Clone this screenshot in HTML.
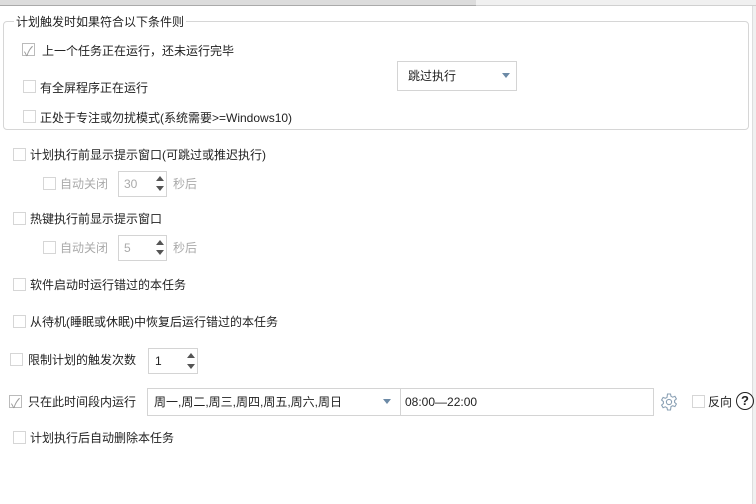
<!DOCTYPE html>
<html><head><meta charset="utf-8"><style>
*{margin:0;padding:0;box-sizing:border-box}
body{width:756px;height:504px;background:#fff;position:relative;overflow:hidden;font-family:"Liberation Sans","Noto Sans CJK SC",sans-serif;font-size:12px;color:#222}
.a{position:absolute}
.cb{position:absolute;width:13px;height:13px;border:1px solid #d6d6d6;background:#fff}
.t{position:absolute;line-height:14px;white-space:nowrap}
.g{color:#aaa}
.box{position:absolute;border:1px solid #d4d4d4;background:#fff}
.up,.dn{position:absolute;width:0;height:0;border-left:4px solid transparent;border-right:4px solid transparent}
.up{border-bottom:5px solid #555}.dn{border-top:5px solid #555}
.chk{position:absolute;left:1px;top:-3px;font-size:13px;color:#999}
</style></head><body>
<div class="a" style="left:0;top:0;width:756px;height:6px;background:#f0f0f0;border-bottom:1px solid #d0d0d0"></div>
<div class="a" style="left:0;top:0;width:476px;height:6px;background:#dcdcdc;border-bottom:1px solid #aaa"></div>
<div class="a" style="left:752px;top:6px;width:4px;height:498px;background:#f0f0f0;border-left:1px solid #ddd"></div>

<div class="a" style="left:3px;top:21px;width:746px;height:109px;border:1px solid #d6d6d6;border-radius:4px"></div>
<div class="t" style="left:14px;top:15px;background:#fff;padding:0 2px">计划触发时如果符合以下条件则</div>

<div class="cb" style="left:22px;top:43px;border-color:#bbb"><span class="chk">✓</span></div>
<div class="t" style="left:42px;top:44px">上一个任务正在运行，还未运行完毕</div>
<div class="cb" style="left:23px;top:80px"></div>
<div class="t" style="left:40px;top:81px">有全屏程序正在运行</div>
<div class="cb" style="left:23px;top:110px"></div>
<div class="t" style="left:40px;top:111px">正处于专注或勿扰模式(系统需要&gt;=Windows10)</div>

<div class="box" style="left:397px;top:61px;width:120px;height:30px"></div>
<div class="t" style="left:408px;top:69px">跳过执行</div>
<div class="dn" style="left:502px;top:73px;border-top-color:#6c8aa6"></div>

<div class="cb" style="left:13px;top:148px"></div>
<div class="t" style="left:30px;top:148px">计划执行前显示提示窗口(可跳过或推迟执行)</div>
<div class="cb" style="left:43px;top:177px"></div>
<div class="t g" style="left:60px;top:177px">自动关闭</div>
<div class="box" style="left:118px;top:171px;width:49px;height:26px"></div>
<div class="t g" style="left:124px;top:177px">30</div>
<div class="up" style="left:156px;top:176px"></div><div class="dn" style="left:156px;top:186px"></div>
<div class="t g" style="left:173px;top:177px">秒后</div>

<div class="cb" style="left:13px;top:212px"></div>
<div class="t" style="left:30px;top:212px">热键执行前显示提示窗口</div>
<div class="cb" style="left:43px;top:241px"></div>
<div class="t g" style="left:60px;top:241px">自动关闭</div>
<div class="box" style="left:118px;top:235px;width:49px;height:26px"></div>
<div class="t g" style="left:124px;top:241px">5</div>
<div class="up" style="left:156px;top:240px"></div><div class="dn" style="left:156px;top:250px"></div>
<div class="t g" style="left:173px;top:241px">秒后</div>

<div class="cb" style="left:13px;top:278px"></div>
<div class="t" style="left:30px;top:278px">软件启动时运行错过的本任务</div>
<div class="cb" style="left:13px;top:315px"></div>
<div class="t" style="left:30px;top:315px">从待机(睡眠或休眠)中恢复后运行错过的本任务</div>

<div class="cb" style="left:10px;top:353px"></div>
<div class="t" style="left:28px;top:353px">限制计划的触发次数</div>
<div class="box" style="left:148px;top:348px;width:50px;height:26px"></div>
<div class="t" style="left:155px;top:354px">1</div>
<div class="up" style="left:187px;top:353px"></div><div class="dn" style="left:187px;top:364px"></div>

<div class="cb" style="left:9px;top:395px;border-color:#bbb"><span class="chk">✓</span></div>
<div class="t" style="left:28px;top:395px">只在此时间段内运行</div>
<div class="box" style="left:147px;top:388px;width:254px;height:28px"></div>
<div class="t" style="left:154px;top:395px">周一,周二,周三,周四,周五,周六,周日</div>
<div class="dn" style="left:383px;top:399px;border-top-color:#6c8aa6"></div>
<div class="box" style="left:400px;top:388px;width:254px;height:28px"></div>
<div class="t" style="left:405px;top:395px">08:00—22:00</div>
<svg class="a" style="left:659px;top:392px" width="20" height="20" viewBox="0 0 20 20"><path d="M8.5 2h3l.5 2.3 1.7.9 2.2-.9 1.5 2.6-1.8 1.6v1.9l1.8 1.6-1.5 2.6-2.2-.9-1.7.9L11.5 18h-3l-.5-2.3-1.7-.9-2.2.9-1.5-2.6 1.8-1.6V9.6L2.6 8l1.5-2.6 2.2.9 1.7-.9z" fill="none" stroke="#8aa0b4" stroke-width="1.1"/><circle cx="10" cy="10" r="2.6" fill="none" stroke="#8aa0b4" stroke-width="1.1"/></svg>
<div class="cb" style="left:692px;top:395px"></div>
<div class="t" style="left:708px;top:395px">反向</div>
<div class="a" style="left:736px;top:392px;width:18px;height:18px;border:1.5px solid #222;border-radius:50%;text-align:center;font-weight:bold;font-size:13px;line-height:15px">?</div>

<div class="cb" style="left:13px;top:431px"></div>
<div class="t" style="left:30px;top:431px">计划执行后自动删除本任务</div>
</body></html>
